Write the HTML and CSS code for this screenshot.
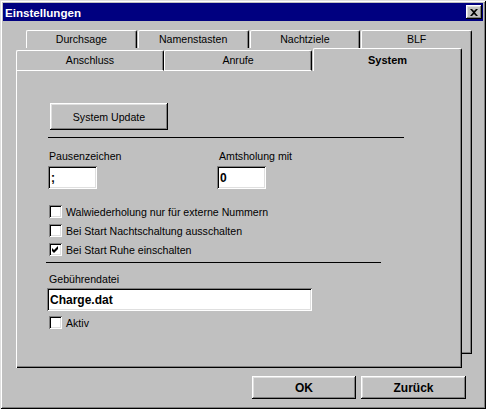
FILE: index.html
```html
<!DOCTYPE html>
<html lang="de">
<head>
    <meta charset="UTF-8">
    <title>Einstellungen</title>
    <link rel="stylesheet" href="styles.css">
</head>
<body>
<div class="window">
    <div class="titlebar">
        <span class="title">Einstellungen</span>
        <span class="close">
            <svg width="8" height="7" viewBox="0 0 8 7"><path d="M0 0h2l2 2 2-2h2L5 3.5 8 7H6L4 5 2 7H0l3-3.5z" fill="#000"/></svg>
        </span>
    </div>
    <div class="body">
        <div class="tabctl">
            <div class="layer back">
                <ul class="tabrow">
                    <li class="tab">Durchsage</li>
                    <li class="tab">Namenstasten</li>
                    <li class="tab">Nachtziele</li>
                    <li class="tab">BLF</li>
                </ul>
                <div class="sheet"></div>
            </div>
            <div class="layer front">
                <ul class="tabrow">
                    <li class="tab w148">Anschluss</li>
                    <li class="tab w148">Anrufe</li>
                    <li class="tab selected">System</li>
                </ul>
                <div class="sheet page">
                    <button class="btn update">System Update</button>
                    <div class="sep sep-top"></div>
                    <div class="fields">
                        <div class="field first">
                            <div class="label">Pausenzeichen</div>
                            <input class="edit small" type="text" value=";">
                        </div>
                        <div class="field second">
                            <div class="label">Amtsholung mit</div>
                            <input class="edit small" type="text" value="0">
                        </div>
                    </div>
                    <div class="checks">
                        <div class="check"><span class="box"></span>Walwiederholung nur für externe Nummern</div>
                        <div class="check"><span class="box"></span>Bei Start Nachtschaltung ausschalten</div>
                        <div class="check"><span class="box"><svg width="13" height="13" viewBox="0 0 13 13"><path d="M3 5L5 7L9 3L9 6L5 10L3 8Z" fill="#000"/></svg></span>Bei Start Ruhe einschalten</div>
                    </div>
                    <div class="sep sep-bottom"></div>
                    <div class="label file-label">Gebührendatei</div>
                    <input class="edit wide" type="text" value="Charge.dat">
                    <div class="check aktiv"><span class="box"></span>Aktiv</div>
                </div>
            </div>
        </div>
        <div class="actions">
            <button class="btn action">OK</button>
            <button class="btn action">Zurück</button>
        </div>
    </div>
</div>
</body>
</html>
```

FILE: styles.css
```css
*{
    margin: 0;
    padding: 0;
    box-sizing: border-box;
}
body{
    background-color: #c0c0c0;
    font-family: "Liberation Sans", Arial, sans-serif;
    font-size: 10.6px;
    color: #000;
}
.window{
    width: 486px;
    height: 409px;
    padding: 3px;
    background-color: #c0c0c0;
    box-shadow: inset 1px 1px #dfdfdf, inset -1px -1px #000, inset 2px 2px #fff, inset -2px -2px #808080;
}
.titlebar{
    height: 18px;
    background-color: #000080;
    display: flex;
    align-items: center;
    justify-content: space-between;
    padding: 0 1px 0 2px;
}
.title{
    color: #fff;
    font-weight: bold;
    font-size: 11.6px;
}
.close{
    width: 16px;
    height: 14px;
    background-color: #c0c0c0;
    display: flex;
    align-items: center;
    justify-content: center;
    box-shadow: inset -1px -1px #000, inset 1px 1px #fff, inset -2px -2px #808080, inset 2px 2px #dfdfdf;
}
.body{
    padding: 9px 0 0 13px;
}
.tabctl{
    display: grid;
    width: 456px;
    height: 338px;
}
.layer{
    grid-area: 1 / 1;
    display: flex;
    flex-direction: column;
}
.back{
    margin-left: 10px;
    height: 324px;
}
.front{
    margin-top: 18px;
    margin-right: 10px;
    height: 320px;
}
.tabrow{
    list-style: none;
    display: flex;
    align-items: flex-start;
}
.back .tabrow{
    height: 18px;
}
.front .tabrow{
    height: 23px;
}
.tab{
    text-align: center;
    background-color: #c0c0c0;
    border-top: 1px solid #fff;
    border-left: 1px solid #fff;
    border-right: 1px solid #000;
    border-radius: 2px 2px 0 0;
    box-shadow: inset -1px 0 #808080;
}
.back .tab{
    flex: 1;
    height: 18px;
    line-height: 17px;
    margin-right: 1px;
}
.back .tab:last-child{
    margin-right: 0;
}
.front .tab{
    margin-top: 2px;
    height: 21px;
    line-height: 19px;
    border-bottom: 1px solid #fff;
}
.w148{
    width: 148px;
}
.front .tab.selected{
    width: 149px;
    margin-top: 0;
    margin-left: 1px;
    height: 23px;
    padding-top: 2px;
    border-bottom: none;
    font-weight: bold;
    font-size: 11px;
}
.sheet{
    flex: 1;
    background-color: #c0c0c0;
    box-shadow: inset -1px -1px #000, inset -2px -2px #808080;
}
.page{
    box-shadow: inset 1px 0 #fff, inset -1px -1px #000, inset -2px -2px #808080;
    padding: 32px 0 0 32px;
}
.btn{
    display: block;
    border: none;
    background-color: #c0c0c0;
    font-family: inherit;
    font-size: 10.6px;
    color: #000;
    box-shadow: inset -1px -1px #000, inset 1px 1px #fff, inset -2px -2px #808080, inset 2px 2px #dfdfdf;
}
.update{
    margin-left: 2px;
    width: 118px;
    height: 27px;
}
.sep{
    height: 1px;
    background-color: #000;
}
.sep-top{
    margin-top: 7px;
    width: 356px;
}
.sep-bottom{
    margin-top: 3px;
    margin-left: -2px;
    width: 335px;
}
.label{
    line-height: 13px;
    height: 13px;
}
.fields{
    display: flex;
    margin-top: 12px;
}
.field.first{
    width: 169px;
}
.field.first .label{
    padding-left: 1px;
}
.field.second .label{
    padding-left: 2px;
}
.edit{
    display: block;
    border: none;
    outline: none;
    background-color: #fff;
    height: 23px;
    padding: 0 3px;
    font-family: inherit;
    font-size: 12px;
    font-weight: bold;
    color: #000;
    box-shadow: inset 1px 1px #808080, inset -1px -1px #fff, inset 2px 2px #000, inset -2px -2px #dfdfdf;
}
.small{
    width: 49px;
    margin-top: 3px;
}
.wide{
    width: 265px;
    margin-top: 2px;
    margin-left: -1px;
}
.checks{
    margin-top: 13px;
}
.check{
    display: flex;
    align-items: center;
    height: 19px;
}
.box{
    width: 13px;
    height: 13px;
    margin: 0 4px 0 1px;
    background-color: #fff;
    box-shadow: inset 1px 1px #808080, inset -1px -1px #fff, inset 2px 2px #000, inset -2px -2px #dfdfdf;
}
.box svg{
    display: block;
}
.file-label{
    margin-top: 10px;
    padding-left: 1px;
}
.aktiv{
    margin-top: 2px;
}
.actions{
    display: flex;
    justify-content: flex-end;
    gap: 5px;
    margin-top: 8px;
    padding-right: 17px;
}
.action{
    width: 104px;
    height: 23px;
    font-weight: bold;
    font-size: 12px;
}
.action:last-child{
    width: 105px;
}
```
